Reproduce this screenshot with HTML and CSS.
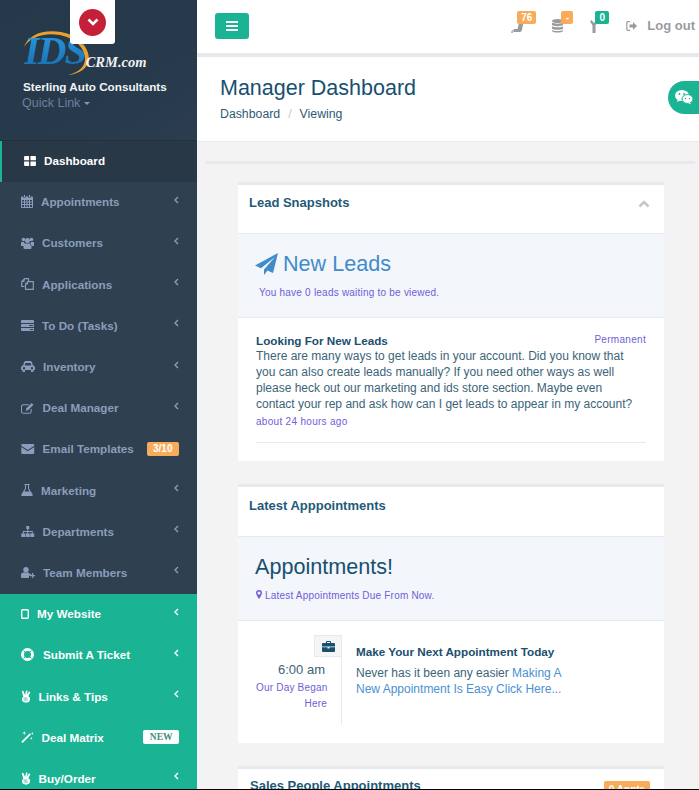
FILE: index.html
```html
<!DOCTYPE html>
<html lang="en">

<head>
    <meta charset="UTF-8">
    <meta name="viewport" content="width=device-width, initial-scale=1.0">
    <title>Manager Dashboard</title>
    <link rel="stylesheet" href="styles.css">
</head>

<body>
    <div id="wrapper">
        <!-- Left sidebar -->
        <div id="sidebar">
            <a class="drop-toggle" href="#">
                <span class="drop-circle">
                    <svg width="12" height="8" viewBox="0 0 12 8"><path d="M1.5 1.5 6 6l4.500-4.500" fill="none" stroke="#fff" stroke-width="2.600"/></svg>
                </span>
            </a>
            <div class="side-head">
                <div class="logo">
                    <svg class="swoosh" width="70" height="46" viewBox="0 0 70 46"><path d="M1 17C5 5 20-1 38 2c17 3 28 15 28 27-1 9-9 15-21 16 12-3 17-9 17-16C62 18 52 8 37 5 21 2 7 7 1 17z" fill="#e8a12e"/></svg>
                    <span class="logo-ids">IDS</span><span class="logo-crm">CRM.com</span>
                </div>
                <div class="side-company">Sterling Auto Consultants</div>
                <div class="side-quick">Quick Link <span class="caret"></span></div>
            </div>

            <ul class="side-menu">
                <li class="active">
                    <svg class="ico" width="12" height="10" viewBox="0 0 13 11"><path d="M0 1a1 1 0 0 1 1-1h4.500v4.700H0zM7 0h5a1 1 0 0 1 1 1v3.700H7zM0 6h5.500v5H1a1 1 0 0 1-1-1zM7 6h6v4a1 1 0 0 1-1 1H7z" fill="#fff"/></svg>
                    <span>Dashboard</span>
                </li>
                <li>
                    <svg class="ico" width="12" height="13" viewBox="0 0 12 13"><path d="M3 0h1v2.500H3zM8 0h1v2.500H8z" fill="currentColor"/><path fill-rule="evenodd" d="M1 1.500h1.500v1.500h2v-1.500h3v1.500h2v-1.500H11a1 1 0 0 1 1 1V12a1 1 0 0 1-1 1H1a1 1 0 0 1-1-1V2.500a1 1 0 0 1 1-1zM1 5v1.500h2V5zm3 0v1.500h1.500V5zm2.500 0v1.500H8V5zM9 5v1.500h2V5zM1 7.500V9h2V7.500zm3 0V9h1.500V7.500zm2.500 0V9H8V7.500zm2.500 0V9h2V7.500zM1 10v2h2v-2zm3 0v2h1.500v-2zm2.500 0v2H8v-2zm2.500 0v2h2v-2z" fill="currentColor"/></svg>
                    <span>Appointments</span>
                    <svg class="chev" width="5" height="8" viewBox="0 0 5 8"><path d="M4 1 1 4l3 3" fill="none" stroke="currentColor" stroke-width="1.400"/></svg>
                </li>
                <li>
                    <svg class="ico" width="13" height="12" viewBox="0 0 13 12"><circle cx="2.500" cy="2.500" r="1.800" fill="currentColor"/><circle cx="10.500" cy="2.500" r="1.800" fill="currentColor"/><circle cx="6.500" cy="3.500" r="2.500" fill="currentColor"/><path d="M0 5h3l1 2.500L3 9H0zM13 5h-3L9 7.500l1 1.500h3zM3.500 6.500h6L10.500 9v2a1 1 0 0 1-1 1h-6a1 1 0 0 1-1-1V9z" fill="currentColor"/></svg>
                    <span>Customers</span>
                    <svg class="chev" width="5" height="8" viewBox="0 0 5 8"><path d="M4 1 1 4l3 3" fill="none" stroke="currentColor" stroke-width="1.400"/></svg>
                </li>
                <li>
                    <svg class="ico" width="13" height="12" viewBox="0 0 13 12"><path d="M3.500 8.500H.7V3.500L3.700.7H7.500V3" fill="none" stroke="currentColor" stroke-width="1.200"/><path d="M7 3.600h5.300v7.700H4.500V6z" fill="none" stroke="currentColor" stroke-width="1.200"/><path d="M3.500 1.500v2.500H1zM7 4v2.500H4.500z" fill="currentColor"/></svg>
                    <span>Applications</span>
                    <svg class="chev" width="5" height="8" viewBox="0 0 5 8"><path d="M4 1 1 4l3 3" fill="none" stroke="currentColor" stroke-width="1.400"/></svg>
                </li>
                <li>
                    <svg class="ico" width="13" height="11" viewBox="0 0 13 11"><path fill-rule="evenodd" d="M1 0h11a1 1 0 0 1 1 1v2H0V1a1 1 0 0 1 1-1zM0 4h13v3H0zm8 1v1h4V5zM0 8h13v2a1 1 0 0 1-1 1H1a1 1 0 0 1-1-1zm9 1v1h3V9z" fill="currentColor"/></svg>
                    <span>To Do (Tasks)</span>
                    <svg class="chev" width="5" height="8" viewBox="0 0 5 8"><path d="M4 1 1 4l3 3" fill="none" stroke="currentColor" stroke-width="1.400"/></svg>
                </li>
                <li>
                    <svg class="ico" width="14" height="11" viewBox="0 0 14 11"><path fill-rule="evenodd" d="M3 1.500C3.300.500 4 0 5 0h4c1 0 1.700.500 2 1.500L12 4.500c1.200.3 2 1 2 2.200V9h-1.500v2H10V9H4v2H1.500V9H0V6.700c0-1.200.8-1.900 2-2.200zM4.300 2 3.700 4.500h6.600L9.700 2zM3 6a1.200 1.200 0 1 0 0 2.400A1.200 1.200 0 0 0 3 6zm8 0a1.200 1.200 0 1 0 0 2.400A1.200 1.200 0 0 0 11 6z" fill="currentColor"/></svg>
                    <span>Inventory</span>
                    <svg class="chev" width="5" height="8" viewBox="0 0 5 8"><path d="M4 1 1 4l3 3" fill="none" stroke="currentColor" stroke-width="1.400"/></svg>
                </li>
                <li>
                    <svg class="ico" width="13.500" height="12" viewBox="0 0 14 12"><path d="M8 2.600H2.500a2 2 0 0 0-2 2v4.900a2 2 0 0 0 2 2h6a2 2 0 0 0 2-2V7" fill="none" stroke="currentColor" stroke-width="1.100"/><path d="M11 .8 13 2.700 7.500 8.200 5 9l.7-2.700z" fill="currentColor"/></svg>
                    <span>Deal Manager</span>
                    <svg class="chev" width="5" height="8" viewBox="0 0 5 8"><path d="M4 1 1 4l3 3" fill="none" stroke="currentColor" stroke-width="1.400"/></svg>
                </li>
                <li>
                    <svg class="ico" width="13.500" height="10" viewBox="0 0 13 10"><path d="M1 0h11a1 1 0 0 1 1 1v.7L6.500 6 0 1.700V1a1 1 0 0 1 1-1zM0 3l6.500 4.300L13 3v6a1 1 0 0 1-1 1H1a1 1 0 0 1-1-1z" fill="currentColor"/></svg>
                    <span>Email Templates</span>
                    <span class="menu-badge">3/10</span>
                </li>
                <li>
                    <svg class="ico" width="12" height="12" viewBox="0 0 12 12"><path d="M3.500 0h5v1H8v3.500l3.700 6c.3.700 0 1.500-1 1.500H1.300c-1 0-1.300-.8-1-1.500L4 4.500V1h-.5zM5 1v3.800L3.500 7.500h5L7 4.800V1z" fill="currentColor" fill-rule="evenodd"/></svg>
                    <span>Marketing</span>
                    <svg class="chev" width="5" height="8" viewBox="0 0 5 8"><path d="M4 1 1 4l3 3" fill="none" stroke="currentColor" stroke-width="1.400"/></svg>
                </li>
                <li>
                    <svg class="ico" width="13.500" height="11" viewBox="0 0 13 11"><path d="M5 0h3v3H7v2h4.500v2.500H13V11H9V7.500h1.500V6H7v1.500h1.500V11h-4V7.500H6V6H2.500v1.500H4V11H0V7.500h1.500V5H6V3H5z" fill="currentColor"/></svg>
                    <span>Departments</span>
                    <svg class="chev" width="5" height="8" viewBox="0 0 5 8"><path d="M4 1 1 4l3 3" fill="none" stroke="currentColor" stroke-width="1.400"/></svg>
                </li>
                <li>
                    <svg class="ico" width="14" height="11" viewBox="0 0 14 11"><circle cx="5" cy="2.700" r="2.700" fill="currentColor"/><path d="M2.500 5.500h5L9 7h1.200v1.500H8V11H1a1 1 0 0 1-1-1V8.200c0-1.500 1-2.700 2.500-2.700z" fill="currentColor"/><path d="M11 6h1.200v2H14v1.200h-1.800V11H11V9.200H9V8h2z" fill="currentColor"/></svg>
                    <span>Team Members</span>
                    <svg class="chev" width="5" height="8" viewBox="0 0 5 8"><path d="M4 1 1 4l3 3" fill="none" stroke="currentColor" stroke-width="1.400"/></svg>
                </li>
                <li class="green">
                    <svg class="ico" width="8" height="10" viewBox="0 0 8 10"><rect x=".7" y=".7" width="6.600" height="8.600" rx="1" fill="none" stroke="currentColor" stroke-width="1.400"/></svg>
                    <span>My Website</span>
                    <svg class="chev" width="5" height="8" viewBox="0 0 5 8"><path d="M4 1 1 4l3 3" fill="none" stroke="currentColor" stroke-width="1.400"/></svg>
                </li>
                <li class="green">
                    <svg class="ico" width="13" height="13" viewBox="0 0 13 13"><circle cx="6.500" cy="6.500" r="5" fill="none" stroke="currentColor" stroke-width="3"/><path d="M2.500 2.500l2.300 2.300M10.500 2.500 8.200 4.800M2.500 10.500l2.300-2.300M10.500 10.500 8.200 8.200" stroke="#1ab394" stroke-width="1"/></svg>
                    <span class="wide">Submit A Ticket</span>
                    <svg class="chev" width="5" height="8" viewBox="0 0 5 8"><path d="M4 1 1 4l3 3" fill="none" stroke="currentColor" stroke-width="1.400"/></svg>
                </li>
                <li class="green">
                    <svg class="ico" width="9.500" height="13" viewBox="0 0 10 13"><path d="M2.500 7 .8.800l1.500-.4L4.300 5 5.300.2l1.700.3-1 4.500L8.500 1l1.300.9L7.700 6.300c1.300.5 1.800 1.500 1.800 2.900C9.500 11.500 8 13 5.500 13 2.500 13 1 11.700 1 9.500 1 8.300 1.600 7.400 2.500 7z" fill="currentColor"/><path d="M2.700 8.200h4M2.700 10.200h4.500" stroke="#1ab394" stroke-width=".8"/></svg>
                    <span>Links &amp; Tips</span>
                    <svg class="chev" width="5" height="8" viewBox="0 0 5 8"><path d="M4 1 1 4l3 3" fill="none" stroke="currentColor" stroke-width="1.400"/></svg>
                </li>
                <li class="green">
                    <svg class="ico" width="12.500" height="12" viewBox="0 0 12 12"><path d="M0 10.700 8.500 2.200l1.300 1.300-8.500 8.500z" fill="currentColor"/><path d="M3 0l.5 1.500L5 2l-1.500.5L3 4l-.5-1.500L1 2l1.500-.5zM11 1l.4 1L12 2.500l-.6.400L11 4l-.4-1.100L10 2.500l.6-.5zM10 6l.4 1 1 .4-1 .4-.4 1-.4-1-1-.4 1-.4z" fill="currentColor"/></svg>
                    <span>Deal Matrix</span>
                    <span class="menu-new">NEW</span>
                </li>
                <li class="green">
                    <svg class="ico" width="9.500" height="13" viewBox="0 0 10 13"><path d="M2.500 7 .8.800l1.500-.4L4.300 5 5.300.2l1.700.3-1 4.500L8.500 1l1.300.9L7.700 6.300c1.300.5 1.800 1.500 1.800 2.900C9.500 11.500 8 13 5.500 13 2.500 13 1 11.700 1 9.500 1 8.300 1.600 7.400 2.500 7z" fill="currentColor"/><path d="M2.700 8.200h4M2.700 10.200h4.500" stroke="#1ab394" stroke-width=".8"/></svg>
                    <span>Buy/Order</span>
                    <svg class="chev" width="5" height="8" viewBox="0 0 5 8"><path d="M4 1 1 4l3 3" fill="none" stroke="currentColor" stroke-width="1.400"/></svg>
                </li>
            </ul>
        </div>

        <!-- Main column -->
        <div id="page">
            <div class="topbar">
                <a class="menu-btn" href="#">
                    <svg width="12" height="10" viewBox="0 0 12 10"><path d="M0 0h12v2H0zM0 4h12v2H0zM0 8h12v2H0z" fill="#fff"/></svg>
                </a>
                <div class="top-links">
                    <div class="top-icon icon-phone">
                        <svg width="15" height="16" viewBox="0 0 15 16"><path d="M8 1h5l-2 11c-.3 1.300-1 2-2 2H3.500C2.500 14 2 13.500 2.300 12.500L3 11h3.500L8.500 3z" fill="#999c9e"/><path d="M0 15c0-2 1-3 2.500-3.500L2 15z" fill="#b5b7b9"/></svg>
                        <span class="top-badge orange badge-76">76</span>
                    </div>
                    <div class="top-icon icon-db">
                        <svg width="11" height="14" viewBox="0 0 11 14"><ellipse cx="5.500" cy="2" rx="5.500" ry="2" fill="#999c9e"/><path d="M0 3.500C1 5 10 5 11 3.500V6C10 7.500 1 7.500 0 6zM0 7.200C1 8.700 10 8.700 11 7.200V9.700C10 11.200 1 11.200 0 9.700zM0 10.900C1 12.400 10 12.400 11 10.900V12C10 14 1 14 0 12z" fill="#999c9e"/></svg>
                        <span class="top-badge orange badge-db">-</span>
                    </div>
                    <div class="top-icon icon-fork">
                        <svg width="8" height="13" viewBox="0 0 8 13"><path d="M0 1.500 1.500 0 4 3 6.500 0 8 1.500 5.500 5.500V13h-3V5.500z" fill="#999c9e"/></svg>
                        <span class="top-badge green-badge badge-0">0</span>
                    </div>
                    <a class="logout" href="#">
                        <svg width="11" height="10" viewBox="0 0 11 10"><path d="M4 .7H1.800a1 1 0 0 0-1 1v6.600a1 1 0 0 0 1 1H4" fill="none" stroke="#999c9e" stroke-width="1.200"/><path d="M3.500 3.500H7V1l4 4-4 4V6.500H3.500z" fill="#999c9e"/></svg>
                        Log out
                    </a>
                </div>
            </div>

            <div class="page-heading">
                <h2>Manager Dashboard</h2>
                <div class="crumbs"><span>Dashboard</span><span class="crumb-sep">/</span><span>Viewing</span></div>
                <a class="chat-tab" href="#">
                    <svg width="18" height="15" viewBox="0 0 18 15"><ellipse cx="7" cy="5.500" rx="7" ry="5.500" fill="#fff"/><path d="M3 9 2 12l4-2z" fill="#fff"/><ellipse cx="12.500" cy="9" rx="5.500" ry="4.500" fill="#fff" stroke="#1ab394" stroke-width="1"/><path d="M15 12.500l1 2-3-1.500z" fill="#fff"/><circle cx="4.500" cy="4" r=".9" fill="#1ab394"/><circle cx="9" cy="4" r=".9" fill="#1ab394"/><circle cx="10.500" cy="8.500" r=".7" fill="#1ab394"/><circle cx="14.500" cy="8.500" r=".7" fill="#1ab394"/></svg>
                </a>
            </div>

            <div class="content">
                <div class="content-rule"></div>

                <!-- Lead snapshots -->
                <div class="ibox">
                    <div class="ibox-title">
                        <h5>Lead Snapshots</h5>
                        <svg class="collapse" width="12" height="8" viewBox="0 0 12 8"><path d="M1.500 6.500 6 2l4.500 4.500" fill="none" stroke="#c4c6c8" stroke-width="2.600"/></svg>
                    </div>
                    <div class="ibox-band">
                        <h2 class="leads-head">
                            <svg width="23" height="22" viewBox="0 0 23 22"><path d="M23 0 0 12.500l6 2.800L20 4 9 16.500V22l3.500-4.500 5.500 2.500z" fill="#428bca"/></svg>
                            New Leads
                        </h2>
                        <div class="small-note leads-note">You have 0 leads waiting to be viewed.</div>
                    </div>
                    <div class="feed">
                        <div class="feed-top">
                            <strong>Looking For New Leads</strong>
                            <span class="small-note feed-tag">Permanent</span>
                        </div>
                        <p>There are many ways to get leads in your account. Did you know that you can also create leads manually? If you need other ways as well please heck out our marketing and ids store section. Maybe even contact your rep and ask how can I get leads to appear in my account?</p>
                        <div class="small-note feed-time">about 24 hours ago</div>
                    </div>
                </div>

                <!-- Appointments -->
                <div class="ibox">
                    <div class="ibox-title title-tall">
                        <h5>Latest Apppointments</h5>
                    </div>
                    <div class="ibox-band">
                        <h2 class="appt-head">Appointments!</h2>
                        <div class="small-note appt-note">
                            <svg width="6" height="9" viewBox="0 0 6 9"><path fill-rule="evenodd" d="M3 0a3 3 0 0 1 3 3c0 1.500-2 4.500-3 6-1-1.500-3-4.500-3-6a3 3 0 0 1 3-3zm0 1.500a1.500 1.500 0 1 0 0 3 1.500 1.500 0 0 0 0-3z" fill="#6f60d8"/></svg>
                            Latest Appointments Due From Now.
                        </div>
                    </div>
                    <div class="timeline">
                        <div class="time-left">
                            <div class="time-icon">
                                <svg width="13" height="11" viewBox="0 0 13 11"><path fill-rule="evenodd" d="M4 2V1a1 1 0 0 1 1-1h3a1 1 0 0 1 1 1v1h3a1 1 0 0 1 1 1v2.500H0V3a1 1 0 0 1 1-1zm1-1v1h3V1zM0 6.300h5.500V7.500h2V6.300H13V10a1 1 0 0 1-1 1H1a1 1 0 0 1-1-1z" fill="#17506f"/></svg>
                            </div>
                            <div class="time-val">6:00 am</div>
                            <div class="small-note time-note">Our Day Began<br>Here</div>
                        </div>
                        <div class="time-body">
                            <strong>Make Your Next Appointment Today</strong>
                            <p>Never has it been any easier <a href="#">Making A New Appointment Is Easy Click Here...</a></p>
                        </div>
                    </div>
                </div>

                <!-- Sales people -->
                <div class="ibox">
                    <div class="ibox-title sales-title">
                        <h5>Sales People Appointments</h5>
                        <span class="appts-badge">0 Appts</span>
                    </div>
                </div>
            </div>
        </div>
    </div>
</body>

</html>
```

FILE: styles.css
```css
/* Basic styling for the page */
html,
body {
    margin: 0;
    height: 790px;
    overflow: hidden;
    background-color: #000000;
}

body {
    font-family: 'Liberation Sans', Arial, sans-serif;
    font-size: 12px;
}

a {
    text-decoration: none;
}

#wrapper {
    display: flex;
    height: 789px;
    overflow: hidden;
    background-color: #f3f3f4;
}

/* Sidebar */
#sidebar {
    position: relative;
    flex: 0 0 197px;
    background-color: #2f4050;
}

.drop-toggle {
    position: absolute;
    top: 0;
    left: 70px;
    width: 45px;
    height: 44px;
    display: flex;
    align-items: center;
    justify-content: center;
    background-color: #ffffff;
    border-radius: 0 0 3px 3px;
    box-shadow: 0 0 1px rgba(0, 0, 0, 0.3);
    z-index: 2;
}

.drop-circle {
    width: 27px;
    height: 27px;
    border-radius: 50%;
    background-color: #c4203a;
    display: flex;
    align-items: center;
    justify-content: center;
}

.side-head {
    height: 141px;
    box-sizing: border-box;
    padding: 30px 0 0 23px;
    border-bottom: 1px solid #22313f;
    background: linear-gradient(150deg, #26394a 0%, #263a4b 60%, #2b3d4e 100%);
}

.logo {
    position: relative;
    height: 47px;
    width: 125px;
    display: flex;
    align-items: flex-end;
    margin-bottom: 2px;
}

.swoosh {
    position: absolute;
    left: 0;
    top: 0;
}

.logo-ids {
    position: relative;
    font-family: 'Liberation Serif', serif;
    font-weight: bold;
    font-style: italic;
    font-size: 40px;
    line-height: 42px;
    letter-spacing: -2px;
    margin: 0 -2px 5px 1px;
    padding-right: 2px;
    color: #1e7fc9;
    background: linear-gradient(180deg, #2a9be0 0%, #176bb0 100%);
    -webkit-background-clip: text;
    background-clip: text;
    -webkit-text-fill-color: transparent;
}

.logo-crm {
    position: relative;
    font-family: 'Liberation Serif', serif;
    font-weight: bold;
    font-style: italic;
    font-size: 14.500px;
    line-height: 16px;
    color: #f1f1f1;
    margin-left: 1px;
    margin-bottom: 7px;
    white-space: nowrap;
}

.side-company {
    font-weight: bold;
    font-size: 11.700px;
    line-height: 15px;
    color: #f0f3f6;
}

.side-quick {
    font-size: 12.500px;
    line-height: 16px;
    padding-top: 1px;
    color: #6f7f9d;
    margin-left: -1px;
}

.caret {
    display: inline-block;
    vertical-align: middle;
    border-top: 3px solid #8a97ad;
    border-left: 3px solid transparent;
    border-right: 3px solid transparent;
}

.side-menu {
    list-style: none;
    margin: 0;
    padding: 0;
}

.side-menu li {
    display: flex;
    align-items: center;
    height: 41.200px;
    box-sizing: border-box;
    padding: 0 18px 2px 21px;
    gap: 8px;
    font-size: 11.700px;
    font-weight: bold;
    color: #8b9dbb;
}

.side-menu li.active {
    background-color: #293846;
    border-left: 2px solid #1ab394;
    padding-left: 22px;
    color: #ffffff;
}

.side-menu li.green {
    background-color: #1ab394;
    color: #ffffff;
}

.ico {
    flex: none;
}

.wide {
    margin-left: 1px;
}

.chev {
    margin-left: auto;
    margin-bottom: 4px;
}

.menu-badge {
    margin-left: auto;
    background-color: #f8ac59;
    color: #ffffff;
    font-size: 10px;
    line-height: 14px;
    padding: 0 6.500px;
    border-radius: 2px;
}

.menu-new {
    margin-left: auto;
    background-color: #ffffff;
    color: #3f8f82;
    font-family: 'Liberation Serif', serif;
    font-size: 9.500px;
    line-height: 14px;
    padding: 0 6.500px;
    border-radius: 2px;
}

/* Main column */
#page {
    flex: 1;
    min-width: 0;
}

.topbar {
    display: flex;
    align-items: flex-start;
    justify-content: space-between;
    height: 57px;
    box-sizing: border-box;
    background-color: #ffffff;
    border-bottom: 4px solid #e7eaec;
    padding: 13px 4px 0 18px;
}

.menu-btn {
    width: 34px;
    height: 26px;
    display: flex;
    align-items: center;
    justify-content: center;
    background-color: #1ab394;
    border-radius: 3px;
}

.top-links {
    display: flex;
    align-items: flex-start;
    color: #999c9e;
}

.top-icon {
    position: relative;
}

.icon-phone {
    margin: 5px 26px 0 0;
}

.icon-db {
    margin: 6px 27px 0 0;
}

.icon-fork {
    margin: 7px 28px 0 0;
}

.top-badge {
    position: absolute;
    color: #ffffff;
    font-weight: bold;
    font-size: 10px;
    line-height: 13px;
    text-align: center;
    border-radius: 2px;
}

.orange {
    background-color: #f8ac59;
}

.green-badge {
    background-color: #1ab394;
}

.badge-76 {
    top: -7px;
    left: 6px;
    width: 19px;
}

.badge-db {
    top: -8px;
    left: 9px;
    width: 12px;
}

.badge-0 {
    top: -9px;
    left: 5px;
    width: 14px;
}

.logout {
    display: flex;
    align-items: center;
    gap: 10px;
    color: #999c9e;
    font-weight: bold;
    font-size: 13px;
    line-height: 26px;
}

.page-heading {
    position: relative;
    height: 85px;
    box-sizing: border-box;
    background-color: #ffffff;
    border-bottom: 1px solid #e7eaec;
    padding-left: 23px;
}

.page-heading h2 {
    margin: 0;
    padding-top: 18px;
    font-size: 21.500px;
    line-height: 26px;
    font-weight: normal;
    color: #17506f;
}

.crumbs {
    margin-top: 6px;
    font-size: 12.300px;
    line-height: 15px;
    color: #2f5a76;
}

.crumb-sep {
    color: #c5c9cf;
    margin: 0 8px;
}

.chat-tab {
    position: absolute;
    top: 24px;
    right: 0;
    width: 31px;
    height: 33px;
    display: flex;
    align-items: center;
    justify-content: center;
    background-color: #1ab394;
    border-radius: 17px 0 0 17px;
}

.content {
    padding: 19px 35px 0 41px;
}

.content-rule {
    height: 3px;
    margin: 0 -31px 18px -32px;
    background-color: #e7eaec;
}

/* Cards */
.ibox {
    background-color: #ffffff;
    border-top: 3px solid #e7eaec;
    margin-bottom: 23px;
}

.ibox-title {
    position: relative;
    height: 48px;
    box-sizing: border-box;
    padding: 10px 11px 0;
}

.title-tall {
    height: 49px;
    padding-top: 11px;
}

.ibox-title h5 {
    margin: 0;
    font-size: 13px;
    line-height: 16px;
    font-weight: bold;
    color: #1f5a78;
}

.collapse {
    position: absolute;
    top: 15px;
    right: 14px;
}

.sales-title {
    display: flex;
    justify-content: space-between;
    padding: 9px 14px 0 12px;
}

.appts-badge {
    height: 18px;
    background-color: #f8ac59;
    color: #ffffff;
    font-weight: bold;
    font-size: 10px;
    line-height: 18px;
    width: 46px;
    text-align: center;
    border-radius: 2px;
    margin-top: 3px;
}

.ibox-band {
    height: 85px;
    box-sizing: border-box;
    background-color: #f3f6fb;
    border-top: 1px solid #e7eaec;
    border-bottom: 1px solid #e7eaec;
    padding-left: 17px;
}

.small-note {
    font-size: 10px;
    line-height: 15px;
    letter-spacing: 0.300px;
    color: #6f60d8;
}

.leads-head {
    display: flex;
    align-items: center;
    gap: 5px;
    margin: 0;
    padding-top: 18px;
    font-size: 21.600px;
    line-height: 24px;
    font-weight: normal;
    color: #428bca;
}

.leads-note {
    margin: 9px 0 0 4px;
    letter-spacing: 0.220px;
}

.appt-head {
    margin: 0;
    padding-top: 18px;
    font-size: 21.600px;
    line-height: 24px;
    font-weight: normal;
    color: #17506f;
}

.appt-note {
    margin: 9px 0 0 1px;
    letter-spacing: 0.200px;
}

.feed {
    padding: 15px 18px 18px;
}

.feed-top {
    display: flex;
    justify-content: space-between;
    line-height: 15px;
    color: #1c4f6e;
}

.feed-top strong {
    font-size: 11.700px;
}

.feed-tag {
    margin-top: -1px;
}

.feed p {
    margin: 0;
    padding-right: 8px;
    font-size: 12px;
    line-height: 16px;
    color: #3b6479;
}

.feed-time {
    padding: 2px 0 13px;
    border-bottom: 1px solid #e7eaec;
}

/* Timeline row */
.timeline {
    display: flex;
    padding: 14px 0 18px 18px;
}

.time-left {
    width: 86px;
    height: 90px;
    box-sizing: border-box;
    border-right: 1px solid #e7eaec;
    text-align: right;
}

.time-icon {
    width: 28px;
    height: 22px;
    box-sizing: border-box;
    margin-left: auto;
    margin-right: -1px;
    display: flex;
    align-items: center;
    justify-content: center;
    background-color: #f5f5f6;
    border: 1px solid #e7eaec;
}

.time-val {
    margin: 4px 16px 0 0;
    font-size: 13px;
    line-height: 18px;
    color: #3b6479;
}

.time-note {
    margin: 1px 14px 0 0;
    line-height: 16px;
    letter-spacing: 0.200px;
    white-space: nowrap;
}

.time-body {
    width: 215px;
    margin-left: 14px;
    color: #1c4f6e;
}

.time-body strong {
    display: block;
    font-size: 11.700px;
    line-height: 16px;
    margin-top: 9px;
    white-space: nowrap;
}

.time-body p {
    margin: 5px 0 0;
    line-height: 16px;
    color: #3b6479;
}

.time-body a {
    color: #4a90d2;
}
```
